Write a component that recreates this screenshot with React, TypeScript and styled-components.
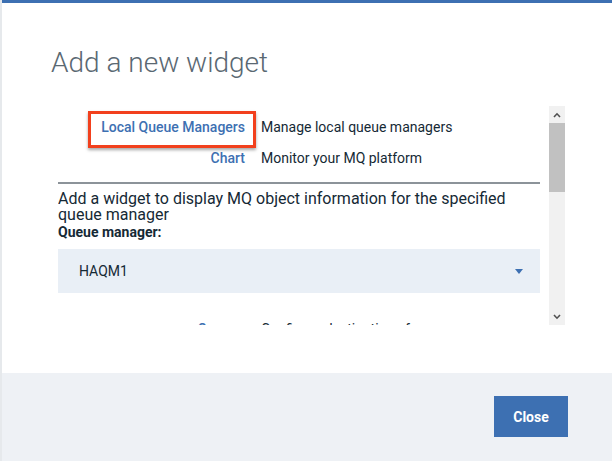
import React from "react";
import styled, { createGlobalStyle } from "styled-components";

const Global = createGlobalStyle`
  html, body { margin: 0; padding: 0; overflow: hidden; }
  body { font-family: Roboto, "Noto Sans", sans-serif; background: #e6e9ec; }
`;

const Page = styled.div`
  width: 612px;
  height: 461px;
  display: flex;
  background: #e6e9ec;
`;

const Modal = styled.div`
  margin-left: 2px;
  flex: 1;
  display: flex;
  flex-direction: column;
  background: #ffffff;
  border-top: 3px solid #3d70b2;
`;

const Title = styled.h2`
  margin: 42px 0 0 49px;
  font-size: 28px;
  line-height: 36px;
  font-weight: 300;
  color: #5a6872;
`;

const Body = styled.div`
  height: 292px;
  flex-shrink: 0;
  padding: 25px 0 0 56px;
  box-sizing: border-box;
`;

const ScrollArea = styled.div`
  display: flex;
  gap: 9px;
  height: 219px;
`;

const Content = styled.div`
  position: relative;
  width: 482px;
  overflow: hidden;
  padding-top: 5px;
  box-sizing: border-box;
`;

const WidgetRow = styled.div`
  display: grid;
  grid-template-columns: 187px 1fr;
  column-gap: 16px;
  height: 31px;
  align-items: center;
  font-size: 14px;
`;

const WidgetName = styled.span`
  text-align: right;
  color: #3d70b2;
  font-weight: 500;
`;

const WidgetDesc = styled.span`
  color: #152935;
`;

const Divider = styled.hr`
  margin: 9px 0 7px;
  border: none;
  height: 2px;
  background: #8c9399;
`;

const Description = styled.p`
  margin: 0;
  font-size: 16px;
  line-height: 16px;
  color: #152935;
`;

const Label = styled.label`
  display: block;
  font-size: 14px;
  line-height: 18px;
  font-weight: 700;
  color: #152935;
`;

const Select = styled.div`
  margin-top: 8px;
  height: 44px;
  background: #e9eff6;
  display: flex;
  align-items: center;
  justify-content: space-between;
  padding: 0 17px 0 21px;
  font-size: 14px;
  color: #152935;
`;

const Caret = styled.span`
  width: 0;
  height: 0;
  border-left: 4.5px solid transparent;
  border-right: 4.5px solid transparent;
  border-top: 5px solid #3d70b2;
`;

const NextRow = styled(WidgetRow)`
  margin-top: 20px;
`;

const Highlight = styled.div`
  position: absolute;
  left: 30px;
  top: 5px;
  width: 168px;
  height: 37px;
  box-sizing: border-box;
  border: 3px solid #f2401d;
  box-shadow: 0 2px 3px rgba(0, 0, 0, 0.35);
  pointer-events: none;
`;

const Track = styled.div`
  width: 16px;
  background: #f1f1f1;
  display: flex;
  flex-direction: column;
`;

const Arrow = styled.div`
  height: 17px;
  display: flex;
  align-items: center;
  justify-content: center;
`;

const Thumb = styled.div`
  height: 69px;
  background: #c1c1c1;
`;

const Spacer = styled.div`
  flex: 1;
`;

const Footer = styled.div`
  flex: 1;
  background: #eef1f5;
  display: flex;
  justify-content: flex-end;
  align-items: flex-start;
  padding: 23px 44px 0 0;
`;

const Button = styled.button`
  width: 74px;
  height: 41px;
  border: none;
  background: #3d70b2;
  color: #ffffff;
  font-family: Roboto, sans-serif;
  font-size: 14px;
  font-weight: 700;
`;

const Chevron = ({ up }: { up?: boolean }) => (
  <svg width="8" height="6" viewBox="0 0 8 6">
    <path
      d={up ? "M1 5 L4 1.8 L7 5" : "M1 1 L4 4.2 L7 1"}
      fill="none"
      stroke="#505050"
      strokeWidth="1.6"
    />
  </svg>
);

export default function App() {
  return (
    <Page>
      <Global />
      <Modal>
        <Title>Add a new widget</Title>
        <Body>
          <ScrollArea>
            <Content>
              <WidgetRow>
                <WidgetName>Local Queue Managers</WidgetName>
                <WidgetDesc>Manage local queue managers</WidgetDesc>
              </WidgetRow>
              <WidgetRow>
                <WidgetName>Chart</WidgetName>
                <WidgetDesc>Monitor your MQ platform</WidgetDesc>
              </WidgetRow>
              <Divider />
              <Description>
                Add a widget to display MQ object information for the specified queue manager
              </Description>
              <Label>Queue manager:</Label>
              <Select>
                <span>HAQM1</span>
                <Caret />
              </Select>
              <NextRow>
                <WidgetName>Queues</WidgetName>
                <WidgetDesc>Configure destinations for messages</WidgetDesc>
              </NextRow>
              <Highlight />
            </Content>
            <Track>
              <Arrow>
                <Chevron up />
              </Arrow>
              <Thumb />
              <Spacer />
              <Arrow>
                <Chevron />
              </Arrow>
            </Track>
          </ScrollArea>
        </Body>
        <Footer>
          <Button>Close</Button>
        </Footer>
      </Modal>
    </Page>
  );
}
